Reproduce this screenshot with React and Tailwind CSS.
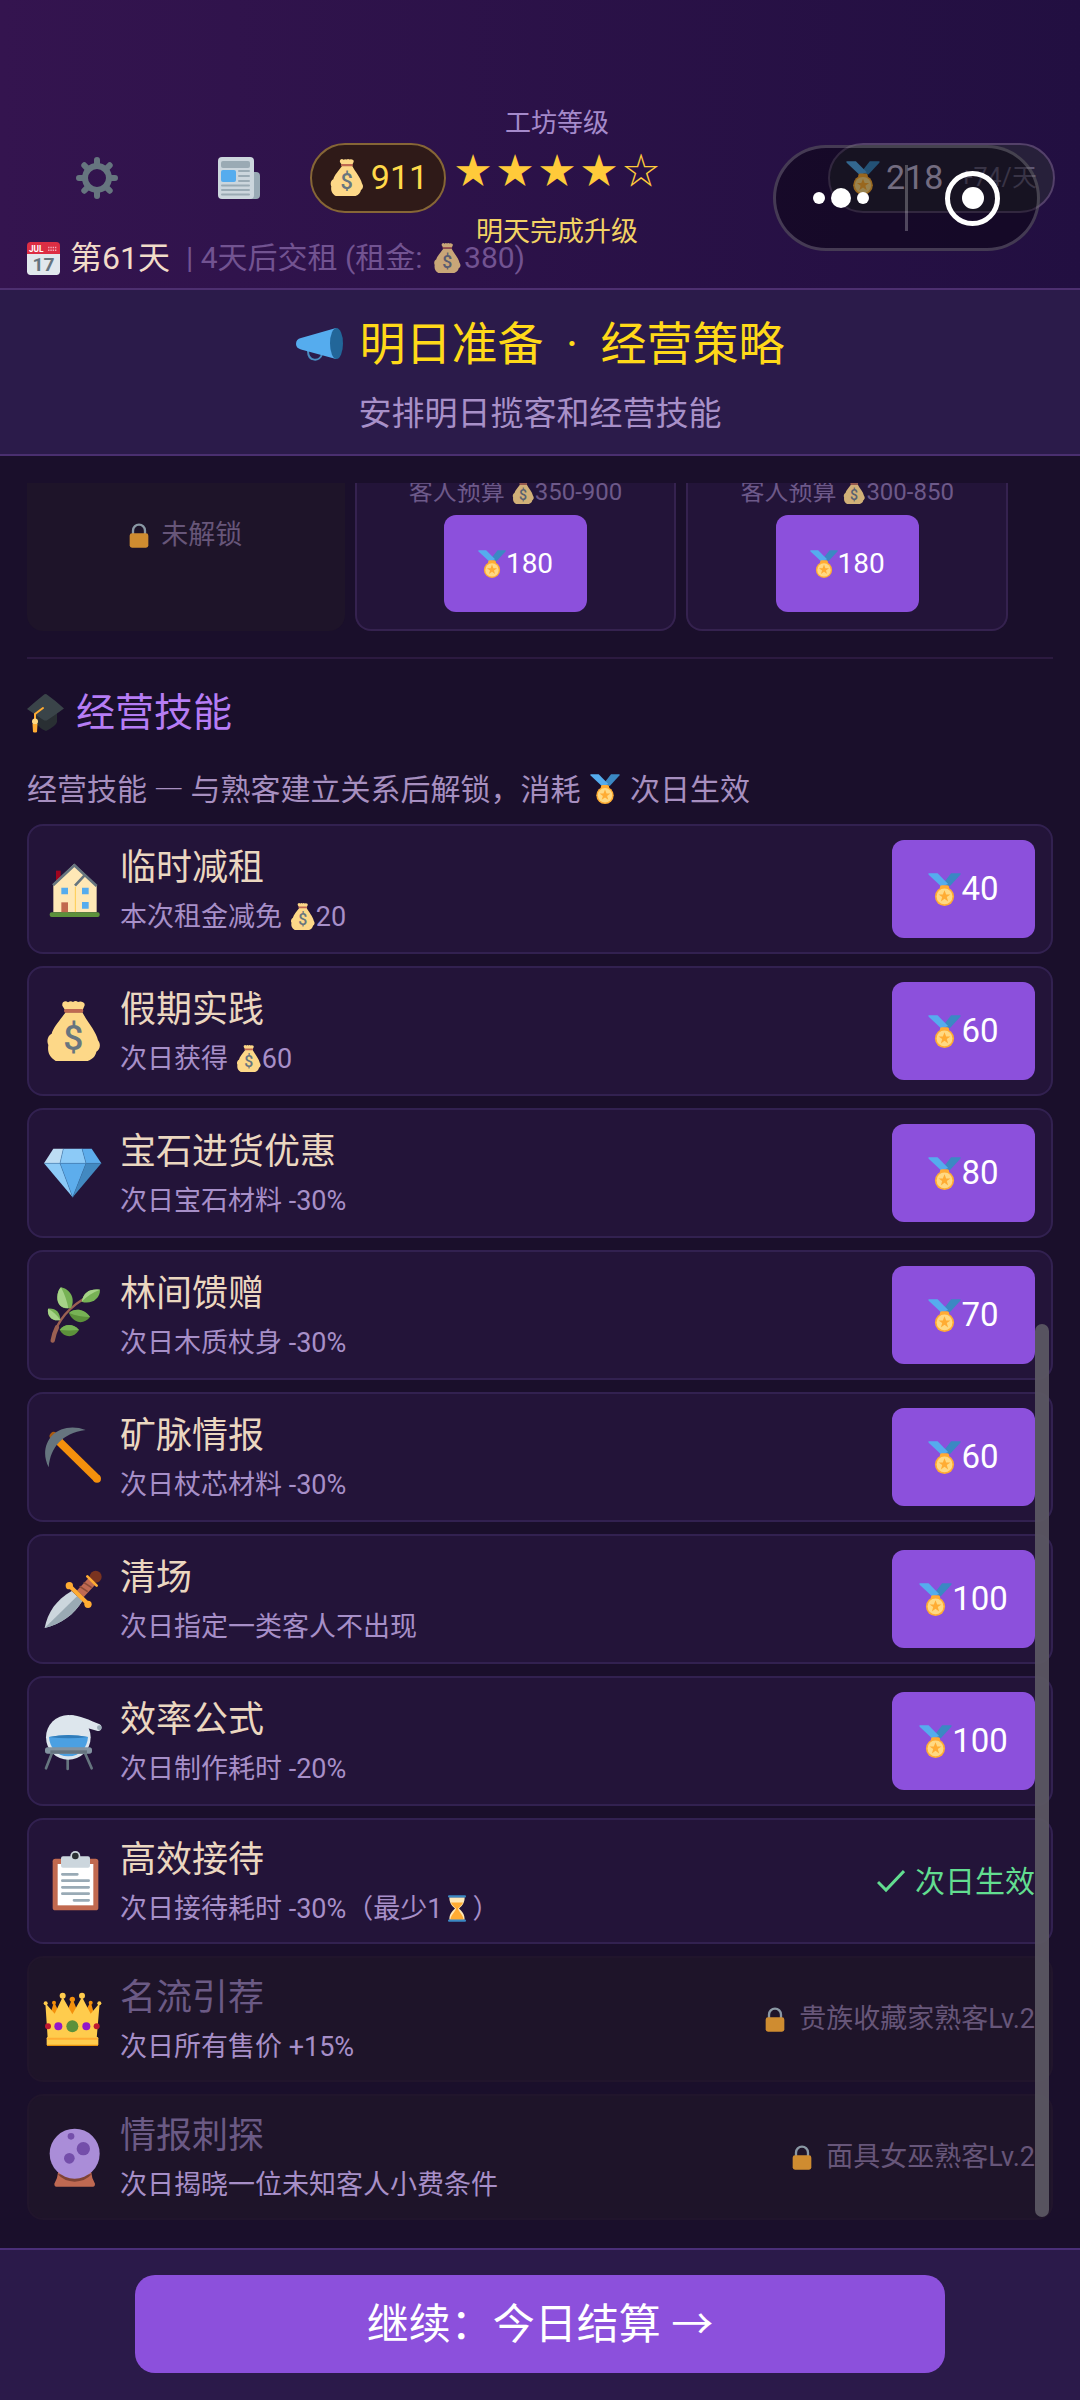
import React from "react";

const FONT = "font-['Roboto','Noto_Sans_CJK_SC',sans-serif]";

function MoneyBag({ className }) {
  return (
    <svg viewBox="0 0 180 180" className={className} aria-hidden="true">
      <path
        fill="#fdd888"
        d="M68 34C52 56 30 80 26 98c-12 6-16 22-10 34-3 20 2 36 22 48h96c16-6 24-16 26-28 12-8 14-22 5-34-6-28-34-58-47-84Z"
      />
      <path fill="#fdd888" d="M60 4q8-7 15 0q8-6 15-1q8-6 15 0q8-4 15 1q6 2 5 9l-6 14H66L58 14q-1-6 2-10Z" />
      <rect x="63" y="24" width="58" height="11" rx="5" fill="#bf6952" />
      <text
        x="91"
        y="147"
        textAnchor="middle"
        fontFamily="Roboto, sans-serif"
        fontWeight="500"
        fontSize="106"
        fill="#67757f"
      >
        $
      </text>
    </svg>
  );
}

function Medal({ className }) {
  return (
    <svg viewBox="0 0 100 100" className={className} aria-hidden="true">
      <path fill="#3b88c3" d="M70 1h28q2 1 0 4L66 40 44 34Z" />
      <path fill="#55acee" d="M2 1h27l32 32-20 9L2 5q-2-3 0-4Z" />
      <rect x="36" y="37" width="28" height="14" rx="6" fill="#ffac33" />
      <circle cx="50" cy="71" r="29" fill="#ffac33" />
      <circle cx="50" cy="71" r="24" fill="#ffd983" />
      <path
        fill="#ffac33"
        d="m50 52 5 13h13l-11 8 4 13-11-8-11 8 4-13-11-8h13Z"
      />
    </svg>
  );
}

function Lock({ className }) {
  return (
    <svg viewBox="0 0 58 75" className={className} aria-hidden="true">
      <path d="M11 34V23a18 18 0 0 1 36 0v11" fill="none" stroke="#8a98a4" strokeWidth="7" />
      <rect x="1" y="31" width="56" height="43" rx="7" fill="#cf8c30" />
    </svg>
  );
}

function Gear({ className }) {
  return (
    <svg viewBox="0 0 42 42" className={className} aria-hidden="true">
      <g stroke="#66757f" strokeLinecap="round">
        <g strokeWidth="6">
          <path d="M21 3v6M21 33v6M3 21h6M33 21h6M8.3 8.3l4 4M29.7 29.7l4 4M8.3 33.7l4-4M29.7 12.3l4-4" />
        </g>
        <circle cx="21" cy="21" r="12" fill="none" strokeWidth="6" />
      </g>
    </svg>
  );
}

function Newspaper({ className }) {
  return (
    <svg viewBox="0 0 42 42" className={className} aria-hidden="true">
      <path fill="#99aab5" d="M32 15h6q4 0 4 4v19q0 4-4 4h-6Z" />
      <rect width="36" height="42" rx="4" fill="#ccd6dd" />
      <rect x="3" y="4" width="29" height="7" rx="2" fill="#9aaab4" />
      <rect x="3" y="13" width="15" height="12" rx="2" fill="#55acee" />
      <path
        d="M21 14h10M21 19h10M21 24h10M4 28.500h27M4 33h27M4 37.500h27"
        stroke="#9aaab4"
        strokeWidth="2"
        strokeLinecap="round"
      />
    </svg>
  );
}

function Calendar({ className }) {
  return (
    <svg viewBox="0 0 36 36" className={className} aria-hidden="true">
      <path fill="#e1e8ed" d="M0 10h36v22q0 4-4 4H4q-4 0-4-4Z" />
      <path fill="#dd2e44" d="M0 13V4q0-4 4-4h28q4 0 4 4v9Z" />
      <path d="M23 6h10M23 9h10" stroke="#f4abba" strokeWidth="1.500" strokeDasharray="1.500 1" />
      <text x="10" y="11" textAnchor="middle" fontFamily="Roboto, sans-serif" fontWeight="700" fontSize="9" fill="#fff">
        JUL
      </text>
      <text x="18" y="32" textAnchor="middle" fontFamily="Roboto, sans-serif" fontWeight="700" fontSize="21" fill="#66757f">
        17
      </text>
    </svg>
  );
}

function Megaphone({ className }) {
  return (
    <svg viewBox="0 0 47 33" className={className} aria-hidden="true">
      <path d="M12 23c0 11 12 11 14 3" fill="none" stroke="#4a8cc0" strokeWidth="2" />
      <path fill="#55acee" d="M5 10 40 0v31L5 21.500Q0 20 0 16q0-5 5-6Z" />
      <ellipse cx="40.500" cy="15.500" rx="6.500" ry="15.500" fill="#226699" />
    </svg>
  );
}

function GradCap({ className }) {
  return (
    <svg viewBox="0 0 37 39" className={className} aria-hidden="true">
      <path fill="#292f33" d="M9 17h21v11q-1 4-11 9-7-3-10-8Z" />
      <path fill="#3a4449" d="M0 15Q9 7 16.500 1q2-2 4 0Q29 7 37 14.500 28 21 20.500 26q-2 1-4 0Q9 21 0 15Z" />
      <path d="M16 14 8 20v9" fill="none" stroke="#ffac33" strokeWidth="2" strokeLinecap="round" />
      <circle cx="8" cy="27.500" r="3" fill="#ffd983" />
      <path fill="#ffac33" d="M5.500 30h5l-.5 8q-2 1-4 0Z" />
    </svg>
  );
}

function Hourglass({ className }) {
  return (
    <svg viewBox="0 0 54 80" className={className} aria-hidden="true">
      <path fill="#ffe8b6" d="M4 6h46c0 16-6 24-17 34 11 10 17 18 17 34H4c0-16 6-24 17-34C10 30 4 22 4 6Z" />
      <path fill="#ffac33" d="M9 22h36c-3 7-8 12-15 18 3 12 14 16 17 34H7c3-18 14-22 17-34-7-6-12-11-15-18Z" />
      <rect width="54" height="7" rx="3" fill="#3b88c3" />
      <rect y="73" width="54" height="7" rx="3" fill="#3b88c3" />
    </svg>
  );
}

function House() {
  return (
    <>
      <path fill="#a0041e" d="M39 35h14v34H39Z" />
      <path fill="#ffe8b6" d="M31 160V74L94 14l67 66v80Z" />
      <path d="M97 84v76" stroke="#ffcc4d" strokeWidth="3" />
      <path d="M30 79 94 19l67 62M96 80l28-30" fill="none" stroke="#66757f" strokeWidth="8" />
      <path fill="#55acee" d="M55 86h20v20H55ZM117 86h20v20h-20ZM117 129h20v20h-20Z" />
      <path fill="#c1694f" d="M55 130h20v31H55Z" />
      <rect x="20" y="160" width="150" height="14" rx="6" fill="#5c913b" />
    </>
  );
}

function Gem() {
  return (
    <>
      <path fill="#bdddf4" d="M31 17h30L51 61H3Z" />
      <path fill="#8ccaf7" d="M61 17h56l12 44H51Z" />
      <path fill="#5dadec" d="M117 17h29l29 44h-46Z" />
      <path fill="#8ccaf7" d="M3 61h48l38 102Z" />
      <path fill="#5dadec" d="M51 61h78L89 163Z" />
      <path fill="#4289c1" d="M129 61h46L89 163Z" />
      <path
        d="M3 61h172M61 17 51 61l38 102 40-102-12-44"
        fill="none"
        stroke="#3f7fb2"
        strokeWidth="1.500"
      />
    </>
  );
}

function Herb() {
  return (
    <>
      <path d="M30 166C34 130 60 80 118 44" fill="none" stroke="#9b6052" strokeWidth="7" strokeLinecap="round" />
      <path d="M29 167q4-22 13-40" fill="none" stroke="#9b6052" strokeWidth="13" strokeLinecap="round" />
      <path fill="#77b255" d="M54 7c28 6 44 34 30 62C60 74 42 62 43 36Q44 16 54 7Z" />
      <path fill="#a6d388" d="M54 7C66 30 72 48 76 70 54 70 42 56 43 36Q44 16 54 7Z" />
      <path fill="#77b255" d="M116 50c6-30 26-40 55-36 1 26-26 46-55 36Z" />
      <path fill="#a6d388" d="M116 50c6-30 26-40 55-36-22 8-40 20-55 36Z" />
      <path fill="#77b255" d="M15 71c24-2 36 12 37 34C28 110 12 94 15 71Z" />
      <path fill="#a6d388" d="M15 71c16 8 28 20 37 34C28 110 12 94 15 71Z" />
      <path fill="#5c913b" d="M78 84c18-16 46-12 63 12-18 24-50 20-63-12Z" />
      <path fill="#77b255" d="M78 84c18-16 46-12 63 12-22 0-44-4-63-12Z" />
      <path fill="#5c913b" d="M50 135c14-20 42-20 58 0-16 26-44 24-58 0Z" />
      <path fill="#77b255" d="M50 135c14-20 42-20 58 0-20 2-40 2-58 0Z" />
    </>
  );
}

function Pickaxe() {
  return (
    <>
      <path d="M32 27 48 43" stroke="#a85a10" strokeWidth="24" strokeLinecap="round" />
      <path d="M48 43 162 155" stroke="#f4900c" strokeWidth="24" />
      <circle cx="162" cy="155" r="12" fill="#f4900c" />
      <path fill="#66757f" d="M128 9C90-6 50 2 28 25 6 48-2 84 17 121 20 88 30 66 48 46 66 28 90 14 128 9Z" />
    </>
  );
}

function Dagger() {
  return (
    <>
      <path fill="#ccd6dd" d="M5 177C14 130 40 92 86 66l32 30C94 136 54 166 5 177Z" />
      <path fill="#9aaab4" d="M5 177 102 82l16 14C94 136 54 166 5 177Z" />
      <path d="m112 74 36-38" stroke="#bf6952" strokeWidth="28" />
      <path d="m110 52 24 16M122 40l24 16" stroke="#8a4b38" strokeWidth="5" />
      <path d="M80 51 135 105" stroke="#ffac33" strokeWidth="12" />
      <circle cx="79" cy="50" r="11" fill="#ffac33" />
      <circle cx="135" cy="106" r="11" fill="#ffac33" />
      <circle cx="158" cy="23" r="18" fill="#7a3320" />
      <path d="m133 22 28 28" stroke="#ffac33" strokeWidth="8" strokeLinecap="round" />
    </>
  );
}

function Alembic() {
  return (
    <>
      <path d="m27 126-18 46M74 142v32M126 126l20 46" stroke="#66757f" strokeWidth="8" strokeLinecap="round" />
      <circle cx="76" cy="79" r="67" fill="#dde6ed" />
      <path fill="#dde6ed" d="M80 12c30 0 60 16 90 28 10 6 6 22-6 20l-50-14Z" />
      <circle cx="169" cy="50" r="7" fill="#99aab5" />
      <path fill="#4ba0e2" d="M18 78q58-10 117 0c-2 30-22 58-59 58S20 108 18 78Z" />
      <path fill="#2f7cba" d="M18 78q58-12 117 0-58 8-117 0Z" />
      <rect x="6" y="109" width="141" height="19" rx="8" fill="#8393a0" />
      <rect x="22" y="118" width="110" height="10" fill="#66757f" />
    </>
  );
}

function Clipboard() {
  return (
    <>
      <rect x="29" y="23" width="137" height="155" rx="8" fill="#c1694f" />
      <rect x="44" y="39" width="107" height="124" fill="#fff" />
      <circle cx="97" cy="15" r="15" fill="#ccd6dd" />
      <rect x="54" y="16" width="87" height="34" rx="6" fill="#ccd6dd" />
      <circle cx="97" cy="15" r="10" fill="#292f33" />
      <path
        d="M58 70h45M58 89h79M58 109h79M58 128h79M93 148h44"
        stroke="#99aab5"
        strokeWidth="8"
        strokeLinecap="round"
      />
    </>
  );
}

function Crown() {
  return (
    <>
      <path fill="#f4900c" d="m33 38 24 50H18ZM88 28l24 60H64ZM143 38l14 50h-42Z" />
      <g fill="#f4900c">
        <circle cx="33" cy="41" r="6" />
        <circle cx="88" cy="31" r="8" />
        <circle cx="143" cy="41" r="6" />
      </g>
      <path fill="#ffcc4d" d="M7 42l28 32 24-50 29 52 29-52 26 50 27-32-9 106H14Z" />
      <g fill="#ffcc4d">
        <circle cx="8" cy="43" r="6" />
        <circle cx="59" cy="20" r="9" />
        <circle cx="117" cy="20" r="9" />
        <circle cx="169" cy="43" r="6" />
      </g>
      <rect x="11" y="143" width="155" height="28" rx="5" fill="#ffcc4d" />
      <path d="M13 149h151" stroke="#ffac33" strokeWidth="6" />
      <path d="M12 169h153" stroke="#e8920f" strokeWidth="4" />
      <circle cx="15" cy="112" r="9" fill="#be1931" />
      <circle cx="161" cy="112" r="9" fill="#be1931" />
      <circle cx="46" cy="112" r="12" fill="#9318c9" />
      <circle cx="130" cy="112" r="12" fill="#9318c9" />
      <circle cx="88" cy="112" r="18" fill="#5c913b" />
    </>
  );
}

function CrystalBall() {
  return (
    <>
      <path fill="#bf6952" d="M46 132h98q2 22 12 38 0 9-6 9H40q-6 0-6-9 10-16 12-38Z" />
      <path fill="#7f4334" d="M44 142h102q-20 22-51 22t-51-22Z" />
      <circle cx="95" cy="80" r="75" fill="#aa8dd8" />
      <g fill="#744eaa">
        <circle cx="84" cy="28" r="10" />
        <circle cx="121" cy="65" r="20" />
        <circle cx="79" cy="94" r="16" />
      </g>
    </>
  );
}

function SkillIcon({ drawing: Drawing }) {
  if (Drawing === MoneyBag) return <MoneyBag className="size-[60px] shrink-0" />;
  return (
    <svg viewBox="0 0 180 180" className="size-[60px] shrink-0" aria-hidden="true">
      <Drawing />
    </svg>
  );
}

const coin = <MoneyBag className="inline-block size-[27px] align-[-4px]" />;

const skills = [
  { name: "临时减租", icon: House, desc: <>本次租金减免 {coin}20</>, cost: 40 },
  { name: "假期实践", icon: MoneyBag, desc: <>次日获得 {coin}60</>, cost: 60 },
  { name: "宝石进货优惠", icon: Gem, desc: "次日宝石材料 -30%", cost: 80 },
  { name: "林间馈赠", icon: Herb, desc: "次日木质杖身 -30%", cost: 70 },
  { name: "矿脉情报", icon: Pickaxe, desc: "次日杖芯材料 -30%", cost: 60 },
  { name: "清场", icon: Dagger, desc: "次日指定一类客人不出现", cost: 100 },
  { name: "效率公式", icon: Alembic, desc: "次日制作耗时 -20%", cost: 100 },
  {
    name: "高效接待",
    icon: Clipboard,
    desc: (
      <>
        次日接待耗时 -30%（最少1
        <Hourglass className="mx-[6px] inline-block h-[27px] w-[18px] align-[-4px]" />）
      </>
    ),
    active: true,
  },
  { name: "名流引荐", icon: Crown, desc: "次日所有售价 +15%", lock: "贵族收藏家熟客Lv.2" },
  { name: "情报刺探", icon: CrystalBall, desc: "次日揭晓一位未知客人小费条件", lock: "面具女巫熟客Lv.2" },
];

function CostButton({ cost, small }) {
  return (
    <button
      type="button"
      className={`flex h-[98px] w-[143px] items-center justify-center rounded-xl bg-[#8c50dc] text-white ${
        small ? "text-[28px]" : "text-[33px]"
      }`}
    >
      <Medal className={small ? "size-[28px]" : "size-[33px]"} />
      {cost}
    </button>
  );
}

function SkillRow({ skill }) {
  const locked = Boolean(skill.lock);
  return (
    <li
      className={`flex items-center gap-[17px] rounded-2xl border-2 py-[14px] pr-4 pl-[14px] ${
        locked ? "border-[#21152c] bg-[#1e1429]" : "border-[#322150] bg-[#231439]"
      }`}
    >
      <SkillIcon drawing={skill.icon} />
      <div className="min-w-0 flex-1">
        <h3 className={`mb-1 text-[36px] leading-[52px] ${locked ? "text-[#6b5a85]" : "text-[#ebd7c0]"}`}>
          {skill.name}
        </h3>
        <p className="text-[27px] leading-[38px] text-[#a78fc8]">{skill.desc}</p>
      </div>
      {skill.cost && <CostButton cost={skill.cost} />}
      {skill.active && (
        <p className="flex items-center gap-[10px] text-[30px] text-[#62dd90]">
          <svg viewBox="0 0 28 24" className="h-6 w-7" aria-hidden="true">
            <path d="m1 13 8 8L27 2" fill="none" stroke="currentColor" strokeWidth="3" />
          </svg>
          次日生效
        </p>
      )}
      {locked && (
        <p className="flex items-center gap-[14px] text-[27px] text-[#675679]">
          <Lock className="h-[25px] w-[20px]" />
          {skill.lock}
        </p>
      )}
    </li>
  );
}

function GuestCard({ budget }) {
  return (
    <div className="flex flex-1 flex-col items-center rounded-b-2xl border-2 border-t-0 border-[#35224f] bg-[#231439] pb-[17px]">
      <p className="-mt-[9px] mb-[5px] text-[24px] leading-[36px] whitespace-nowrap text-[#6d5989]">
        客人预算 <MoneyBag className="inline-block size-6 align-[-4px] opacity-80" />
        {budget}
      </p>
      <CostButton cost={180} small />
    </div>
  );
}

function StatusHeader() {
  return (
    <header className="relative border-b-2 border-[#4d2f70] bg-linear-to-r from-[#34144f] to-[#220f41] pt-[104px] pb-3">
      <div className="flex h-[147px] items-center pr-[25px] pl-[26px]">
        <button type="button" aria-label="设置" className="flex w-[142px] shrink-0 justify-center py-4">
          <Gear className="size-[42px]" />
        </button>
        <button type="button" aria-label="日报" className="flex w-[142px] shrink-0 justify-center py-4">
          <Newspaper className="size-[42px]" />
        </button>
        <div className="flex h-[70px] w-[136px] shrink-0 items-center justify-center gap-[6px] rounded-full border-2 border-[#866636] bg-[#2f1a18] text-[34px] text-[#ffd94a]">
          <MoneyBag className="size-[37px]" />
          911
        </div>
        <div className="ml-[6px] w-[210px] shrink-0 text-center">
          <p className="text-[26px] leading-[38px] text-[#a58acb]">工坊等级</p>
          <p className="mb-[11px] flex justify-between text-[36px] leading-[60px] text-[#ffca3a]">
            <span className="w-[42px]">★</span>
            <span className="w-[42px]">★</span>
            <span className="w-[42px]">★</span>
            <span className="w-[42px]">★</span>
            <span className="w-[42px]">☆</span>
          </p>
          <p className="text-[27px] leading-[38px] text-[#f2d264]">明天完成升级</p>
        </div>
        <div className="ml-auto flex h-[70px] w-[227px] shrink-0 items-center rounded-full border-2 border-[#54416a] bg-[#27203a] pl-4 text-[34px] text-[#c0b4d5]">
          <Medal className="mr-[6px] size-[34px]" />
          218
          <span className="ml-4 text-[25px] text-[#5f5775]">+74/天</span>
        </div>
      </div>
      <div className="-mt-[11px] flex items-center pl-[27px] leading-[36px]">
        <Calendar className="mr-[10px] size-[33px]" />
        <span className="text-[32px] text-[#f2dcc9]">第61天</span>
        <span className="ml-4 text-[30px] whitespace-nowrap text-[#725391]">
          | 4天后交租 (租金: <MoneyBag className="mx-[2px] inline-block size-[30px] align-[-5px] opacity-75" />
          380)
        </span>
      </div>
      <div className="absolute top-[145px] right-10 flex h-[106px] w-[267px] items-center rounded-full border-3 border-white/20 bg-black/40">
        <button type="button" aria-label="更多" className="flex h-full flex-1 items-center justify-center gap-[6px]">
          <span className="size-3 rounded-full bg-white" />
          <span className="size-5 rounded-full bg-white" />
          <span className="size-3 rounded-full bg-white" />
        </button>
        <span className="h-[66px] w-[3px] bg-white/25" />
        <button type="button" aria-label="关闭" className="flex h-full flex-1 items-center justify-center">
          <span className="flex size-[55px] items-center justify-center rounded-full border-5 border-white">
            <span className="size-[22px] rounded-full bg-white" />
          </span>
        </button>
      </div>
    </header>
  );
}

export default function App() {
  return (
    <div className={`flex min-h-screen flex-col bg-[#1a0f2b] ${FONT}`} lang="zh-CN">
      <StatusHeader />

      <section className="border-b-2 border-[#4a2f70] bg-[#2b1b4a] pt-[22px] pb-4 text-center">
        <h1 className="flex items-center justify-center gap-[17px] text-[46px] leading-[64px] text-[#ffd919]">
          <Megaphone className="h-[33px] w-[47px]" />
          <span>
            明日准备 <span className="mx-[11px]">·</span> 经营策略
          </span>
        </h1>
        <p className="mt-[14px] text-[33px] leading-[48px] text-[#a890c8]">安排明日揽客和经营技能</p>
      </section>

      <main className="relative flex-1 px-[27px] pt-[27px] pb-[26px]">
        <div className="flex h-[148px] gap-[10px] overflow-hidden pr-[45px]">
          <div className="flex flex-1 items-start justify-center gap-3 rounded-b-2xl bg-[#1e1429] pt-[34px] text-[27px] leading-[36px] text-[#675679]">
            <Lock className="mt-[6px] h-[25px] w-[20px]" />
            未解锁
          </div>
          <GuestCard budget="350-900" />
          <GuestCard budget="300-850" />
        </div>

        <h2 className="mt-[26px] flex items-center gap-3 border-t-2 border-[#2c1a40] pt-7 text-[39px] leading-[52px] text-[#b67df5]">
          <GradCap className="h-[39px] w-[37px]" />
          经营技能
        </h2>
        <p className="mt-[28px] font-['Noto_Sans_CJK_SC',sans-serif] text-[30px] leading-[40px] text-[#a78fc0]">
          经营技能 — 与熟客建立关系后解锁，消耗 <Medal className="mx-[3px] inline-block size-[30px] align-[-4px]" /> 次日生效
        </p>

        <ul className="mt-[17px] flex flex-col gap-3">
          {skills.map((skill) => (
            <SkillRow key={skill.name} skill={skill} />
          ))}
        </ul>

        <div className="absolute right-[31px] bottom-[31px] h-[893px] w-[14px] rounded-full bg-[#5b5662]/95" />
      </main>

      <footer className="flex justify-center border-t-2 border-[#4a2f78] bg-[#2b1a4a] pt-[25px] pb-[27px]">
        <button type="button" className="h-[98px] w-3/4 rounded-[20px] bg-[#8c50dc] text-[42px] text-white">
          继续：今日结算 →
        </button>
      </footer>
    </div>
  );
}
